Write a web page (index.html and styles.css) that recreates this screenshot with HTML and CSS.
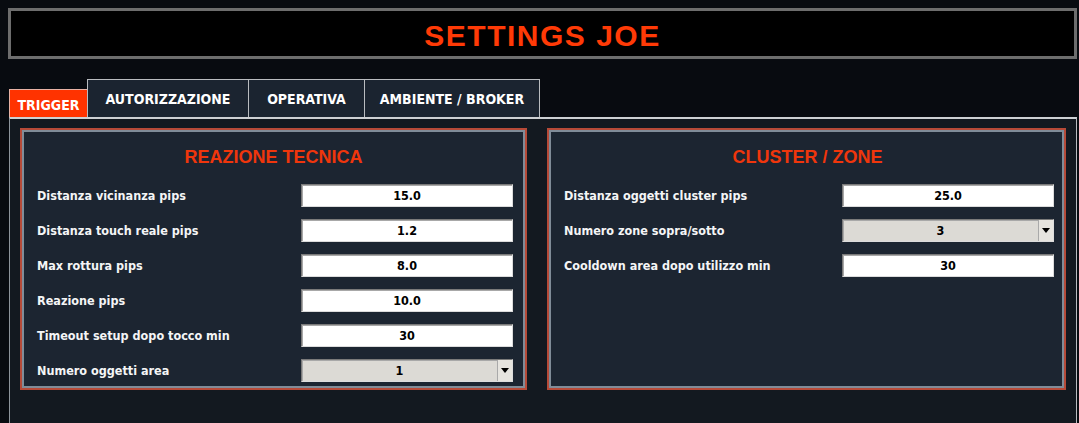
FILE: index.html
```html
<!DOCTYPE html>
<html lang="it">

<head>
    <meta charset="UTF-8">
    <meta name="viewport" content="width=device-width, initial-scale=1.0">
    <title>Settings Joe</title>
    <link rel="stylesheet" href="styles.css">
</head>

<body>
    <header class="title-bar">
        <h1>SETTINGS JOE</h1>
    </header>

    <nav class="tabs">
        <div class="tab tab-trigger active">TRIGGER</div>
        <div class="tab tab-auth">AUTORIZZAZIONE</div>
        <div class="tab tab-oper">OPERATIVA</div>
        <div class="tab tab-env">AMBIENTE / BROKER</div>
    </nav>

    <main class="tab-frame">
        <section class="panel panel-left">
            <h2>REAZIONE TECNICA</h2>
            <div class="rows">
                <label for="dist-vic">Distanza vicinanza pips</label>
                <input class="field" type="text" id="dist-vic" value="15.0" readonly>

                <label for="dist-touch">Distanza touch reale pips</label>
                <input class="field" type="text" id="dist-touch" value="1.2" readonly>

                <label for="max-rott">Max rottura pips</label>
                <input class="field" type="text" id="max-rott" value="8.0" readonly>

                <label for="reaz">Reazione pips</label>
                <input class="field" type="text" id="reaz" value="10.0" readonly>

                <label for="timeout">Timeout setup dopo tocco min</label>
                <input class="field" type="text" id="timeout" value="30" readonly>

                <label>Numero oggetti area</label>
                <div class="combo">
                    <span class="combo-value">1</span>
                    <span class="combo-btn"><i class="arrow"></i></span>
                </div>
            </div>
        </section>

        <section class="panel panel-right">
            <h2>CLUSTER / ZONE</h2>
            <div class="rows">
                <label for="dist-cluster">Distanza oggetti cluster pips</label>
                <input class="field" type="text" id="dist-cluster" value="25.0" readonly>

                <label>Numero zone sopra/sotto</label>
                <div class="combo">
                    <span class="combo-value">3</span>
                    <span class="combo-btn"><i class="arrow"></i></span>
                </div>

                <label for="cooldown">Cooldown area dopo utilizzo min</label>
                <input class="field" type="text" id="cooldown" value="30" readonly>
            </div>
        </section>
    </main>
</body>

</html>
```

FILE: styles.css
```css
* {
    padding: 0;
    margin: 0;
    box-sizing: border-box;
}

html,
body {
    height: 100%;
}

body {
    padding: 8px 2px 0 8px;
    background-color: #080b10;
    font-family: "DejaVu Sans Condensed", "DejaVu Sans", sans-serif;
    font-stretch: condensed;
    display: flex;
    flex-direction: column;
    overflow: hidden;
}

input {
    font: inherit;
}

/* top title */
.title-bar {
    height: 51px;
    border: 3px solid #6d6d6d;
    background-color: #000;
    display: flex;
    align-items: center;
    justify-content: center;
    padding-top: 4px;
}

.title-bar h1 {
    font-family: "Liberation Sans", Arial, sans-serif;
    font-stretch: normal;
    font-size: 30px;
    letter-spacing: 1.5px;
    color: #ff3a06;
    font-weight: bold;
}

/* tab strip */
.tabs {
    margin-top: 20px;
    margin-left: 1px;
    height: 38px;
    display: flex;
    align-items: flex-end;
}

.tab {
    height: 38px;
    border: 1px solid #b9bcc0;
    border-bottom: none;
    background-color: #1b2430;
    color: #fff;
    font-size: 14px;
    font-weight: bold;
    display: flex;
    align-items: center;
    justify-content: center;
    margin-left: -1px;
}

.tab.active {
    height: 28px;
    margin-left: 0;
    background-color: #ff3300;
    border-color: #e8b2a4;
    padding-top: 2px;
}

.tab-trigger { width: 79px; }
.tab-auth { width: 162px; }
.tab-oper { width: 117px; }
.tab-env { width: 176px; }

/* tab body */
.tab-frame {
    flex: 1;
    margin-left: 1px;
    border-top: 2px solid #cdd0d3;
    border-left: 1px solid #8d949b;
    border-right: 1px solid #b9bcc0;
    background-color: #131920;
    padding: 9px 11px 0 10px;
    display: grid;
    grid-template-columns: 507px 519px;
    column-gap: 20px;
    align-items: start;
}

.panel {
    height: 262px;
    background-color: #1c2531;
    border: 2px solid #b64a38;
    box-shadow: inset 0 0 0 2px #808c98;
    padding: 16px 12px 6px 15px;
}

.panel-right {
    padding-right: 10px;
}

.panel h2 {
    font-family: "Liberation Sans", Arial, sans-serif;
    font-stretch: normal;
    font-size: 18px;
    line-height: 22px;
    color: #f0360c;
    text-align: center;
    margin: 0 1px 16px -2px;
}

.rows {
    display: grid;
    grid-template-columns: 1fr 212px;
    row-gap: 12px;
    align-items: center;
}

.rows label {
    color: #f4f5f6;
    font-size: 12.5px;
    font-weight: bold;
}

.field,
.combo {
    height: 23px;
    border: 1px solid;
    border-color: #7a7a7a #dcdcdc #dcdcdc #7a7a7a;
    box-shadow: inset 1px 1px 0 #a8a8a8;
    font-size: 12.5px;
    font-weight: bold;
    color: #000;
}

.field {
    width: 100%;
    background-color: #fff;
    text-align: center;
    outline: none;
}

.combo {
    background-color: #dcdad5;
    display: flex;
}

.combo-value {
    flex: 1;
    display: flex;
    align-items: center;
    justify-content: center;
}

.combo-btn {
    width: 15px;
    border-left: 1px solid #a9a9a9;
    background-color: #e6e4df;
    display: flex;
    align-items: center;
    justify-content: center;
}

.arrow {
    width: 0;
    height: 0;
    border-left: 4px solid transparent;
    border-right: 4px solid transparent;
    border-top: 5px solid #000;
}
```
